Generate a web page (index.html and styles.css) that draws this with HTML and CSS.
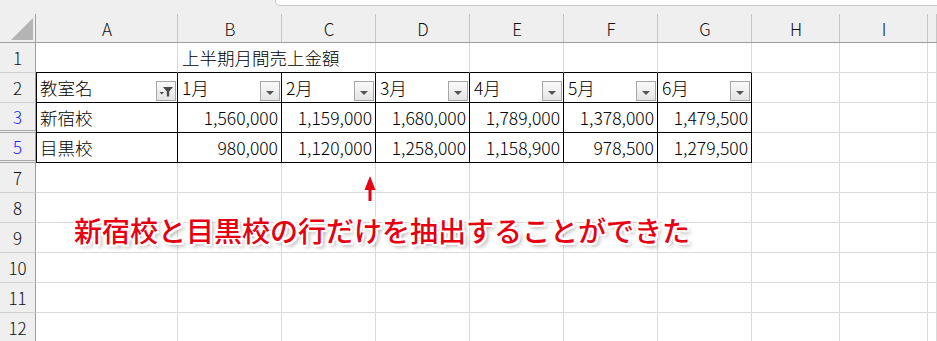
FILE: index.html
```html
<!DOCTYPE html>
<html lang="ja">
<head>
    <meta charset="UTF-8">
    <title>上半期月間売上金額</title>
    <link rel="stylesheet" href="styles.css">
</head>
<body>

    <!-- 数式バーの下端 -->
    <div class="topbar"><div class="namebox"></div></div>

    <div class="sheet">
        <!-- 列見出し -->
        <div class="corner">
            <svg width="36" height="37" viewBox="0 0 36 37"><polygon points="11,34 33,34 33,12" fill="#b4b4b4"/></svg>
        </div>
        <div class="colhead">A</div>
        <div class="colhead">B</div>
        <div class="colhead">C</div>
        <div class="colhead">D</div>
        <div class="colhead">E</div>
        <div class="colhead">F</div>
        <div class="colhead">G</div>
        <div class="colhead">H</div>
        <div class="colhead">I</div>
        <div class="colhead"></div>

        <!-- 1行目 -->
        <div class="rowhead">1</div>
        <div class="cell tb"></div>
        <div class="cell tb span2">上半期月間売上金額</div>
        <div class="cell tb"></div>
        <div class="cell tb"></div>
        <div class="cell tb"></div>
        <div class="cell tb"></div>
        <div class="cell"></div>
        <div class="cell"></div>
        <div class="cell"></div>

        <!-- 2行目：見出しとフィルターボタン -->
        <div class="rowhead">2</div>
        <div class="cell t first">教室名
            <span class="filter-btn">
                <svg width="18" height="18" viewBox="0 0 18 18">
                    <path d="M6 5h10l-3.8 4.5v5h-2.4v-5z" fill="#4a4a4a"/>
                    <path d="M2.5 10h4.5l-2.25 2.5z" fill="#4a4a4a"/>
                </svg>
            </span>
        </div>
        <div class="cell t">1月<span class="filter-btn"><i class="tri"></i></span></div>
        <div class="cell t">2月<span class="filter-btn"><i class="tri"></i></span></div>
        <div class="cell t">3月<span class="filter-btn"><i class="tri"></i></span></div>
        <div class="cell t">4月<span class="filter-btn"><i class="tri"></i></span></div>
        <div class="cell t">5月<span class="filter-btn"><i class="tri"></i></span></div>
        <div class="cell t">6月<span class="filter-btn"><i class="tri"></i></span></div>
        <div class="cell"></div>
        <div class="cell"></div>
        <div class="cell"></div>

        <!-- 3行目（4行目は非表示） -->
        <div class="rowhead filtered hidden-below">3</div>
        <div class="cell t first">新宿校</div>
        <div class="cell t num">1,560,000</div>
        <div class="cell t num">1,159,000</div>
        <div class="cell t num">1,680,000</div>
        <div class="cell t num">1,789,000</div>
        <div class="cell t num">1,378,000</div>
        <div class="cell t num">1,479,500</div>
        <div class="cell"></div>
        <div class="cell"></div>
        <div class="cell"></div>

        <!-- 5行目（6行目は非表示） -->
        <div class="rowhead filtered hidden-below">5</div>
        <div class="cell t first">目黒校</div>
        <div class="cell t num">980,000</div>
        <div class="cell t num">1,120,000</div>
        <div class="cell t num">1,258,000</div>
        <div class="cell t num">1,158,900</div>
        <div class="cell t num">978,500</div>
        <div class="cell t num">1,279,500</div>
        <div class="cell"></div>
        <div class="cell"></div>
        <div class="cell"></div>

        <!-- 空の行 -->
        <div class="rowhead">7</div>
        <div class="cell"></div><div class="cell"></div><div class="cell"></div><div class="cell"></div><div class="cell"></div>
        <div class="cell"></div><div class="cell"></div><div class="cell"></div><div class="cell"></div><div class="cell"></div>

        <div class="rowhead">8</div>
        <div class="cell"></div><div class="cell"></div><div class="cell"></div><div class="cell"></div><div class="cell"></div>
        <div class="cell"></div><div class="cell"></div><div class="cell"></div><div class="cell"></div><div class="cell"></div>

        <div class="rowhead">9</div>
        <div class="cell"></div><div class="cell"></div><div class="cell"></div><div class="cell"></div><div class="cell"></div>
        <div class="cell"></div><div class="cell"></div><div class="cell"></div><div class="cell"></div><div class="cell"></div>

        <div class="rowhead">10</div>
        <div class="cell"></div><div class="cell"></div><div class="cell"></div><div class="cell"></div><div class="cell"></div>
        <div class="cell"></div><div class="cell"></div><div class="cell"></div><div class="cell"></div><div class="cell"></div>

        <div class="rowhead">11</div>
        <div class="cell"></div><div class="cell"></div><div class="cell"></div><div class="cell"></div><div class="cell"></div>
        <div class="cell"></div><div class="cell"></div><div class="cell"></div><div class="cell"></div><div class="cell"></div>

        <div class="rowhead">12</div>
        <div class="cell"></div><div class="cell"></div><div class="cell"></div><div class="cell"></div><div class="cell"></div>
        <div class="cell"></div><div class="cell"></div><div class="cell"></div><div class="cell"></div><div class="cell"></div>
    </div>

    <!-- 注釈 -->
    <svg class="arrow" width="14" height="28" viewBox="0 0 14 28">
        <path d="M7 1L12.5 15H8.5V26H5.5V15H1.5Z" fill="#e60012"/>
    </svg>
    <p class="note">新宿校と目黒校の行だけを抽出することができた</p>

</body>
</html>
```

FILE: styles.css
```css
body {
    margin: 0;
    position: relative;
    font-family: "Noto Sans CJK JP", "Noto Sans", sans-serif;
    color: #111;
    background-color: white;
    overflow: hidden;
}

.topbar {
    height: 6px;
    background-color: #efefef;
}

.namebox {
    margin-left: 275px;
    height: 5px;
    background-color: white;
    border-left: 1px solid #c8c8c8;
    border-bottom: 1px solid #c8c8c8;
    border-bottom-left-radius: 5px;
}

.sheet {
    display: grid;
    grid-template-columns: 36px 142px 104px 94px 94px 94px 94px 94px 88px 88px 1fr;
    grid-template-rows: 37px repeat(10, 30px);
}

.corner {
    background: linear-gradient(#9e9e9e, #9e9e9e) right bottom / 1px 28px no-repeat, #efefef;
    border-bottom: 1px solid #9e9e9e;
    box-sizing: border-box;
}

.corner svg {
    display: block;
}

.colhead {
    background: linear-gradient(#c6c6c6, #c6c6c6) right bottom / 1px 28px no-repeat, #efefef;
    border-bottom: 1px solid #9e9e9e;
    box-sizing: border-box;
    display: flex;
    align-items: center;
    justify-content: center;
    padding-top: 8px;
    font-size: 17px;
    font-weight: 300;
    color: #111;
}

.rowhead {
    background-color: #efefef;
    border-right: 1px solid #9e9e9e;
    border-bottom: 1px solid #d0d0d0;
    box-sizing: border-box;
    display: flex;
    align-items: center;
    justify-content: center;
    font-size: 17px;
    font-weight: 300;
    color: #111;
}

.rowhead.filtered {
    color: #2424ff;
}

.rowhead.hidden-below {
    border-bottom: 3px double #a8a8a8;
}

.cell {
    border-right: 1px solid #dadada;
    border-bottom: 1px solid #dadada;
    box-sizing: border-box;
    display: flex;
    align-items: center;
    padding: 0 1px 0 4px;
    font-size: 17.5px;
    font-weight: 300;
    white-space: nowrap;
    color: #000;
}

.span2 {
    grid-column: span 2;
}

/* 表の罫線 */
.tb {
    border-bottom-color: #000;
}

.t {
    border-right-color: #000;
    border-bottom-color: #000;
}

.first {
    box-shadow: inset 1px 0 0 #000;
}

.num {
    justify-content: flex-end;
    padding-right: 3px;
}

.filter-btn {
    margin-left: auto;
    align-self: flex-end;
    margin-bottom: 1px;
    width: 20px;
    height: 20px;
    box-sizing: border-box;
    border: 1px solid #a6a6a6;
    background: linear-gradient(#fafafa, #e4e4e4);
    display: flex;
    align-items: center;
    justify-content: center;
}

.filter-btn svg {
    display: block;
}

.tri {
    width: 0;
    height: 0;
    margin-top: 3px;
    border-left: 4px solid transparent;
    border-right: 4px solid transparent;
    border-top: 4px solid #555;
}

.arrow {
    position: absolute;
    left: 363px;
    top: 175px;
}

.note {
    position: absolute;
    left: 74px;
    top: 210px;
    margin: 0;
    font-size: 28px;
    line-height: 40px;
    font-weight: 500;
    color: #e60012;
    white-space: nowrap;
    text-shadow:
        2px 0 0 #fff, -2px 0 0 #fff, 0 2px 0 #fff, 0 -2px 0 #fff,
        2px 2px 0 #fff, -2px -2px 0 #fff, 2px -2px 0 #fff, -2px 2px 0 #fff,
        3px 3px 4px rgba(0, 0, 0, 0.4);
}
```
